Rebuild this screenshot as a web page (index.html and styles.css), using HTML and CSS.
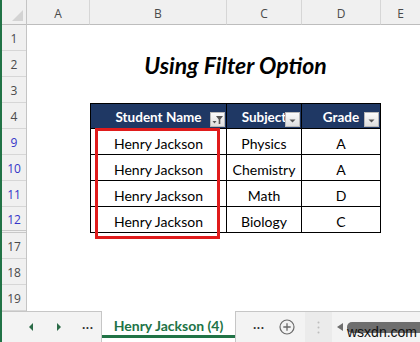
FILE: index.html
```html
<!DOCTYPE html>
<html>
<head>
<meta charset="utf-8">
<link rel="stylesheet" href="styles.css">
</head>
<body>
<div class="app">
  <div class="sheet">
    <div class="rowheads">
      <div class="corner"><svg width="11" height="11" viewBox="0 0 11 11"><polygon points="11,0 11,11 0,11" fill="#d3d3d3"/></svg></div>
      <div class="rh">1</div>
      <div class="rh">2</div>
      <div class="rh">3</div>
      <div class="rh">4</div>
      <div class="rh blue">9</div>
      <div class="rh blue">10</div>
      <div class="rh blue">11</div>
      <div class="rh blue hidden-after">12</div>
      <div class="rh">17</div>
      <div class="rh">18</div>
      <div class="rh">19</div>
    </div>
    <div class="cells">
      <div class="ch">A</div>
      <div class="ch">B</div>
      <div class="ch">C</div>
      <div class="ch">D</div>
      <div class="ch last">E</div>
      <div class="title">Using Filter Option</div>
      <div class="tbl">
        <div class="th">Student Name<span class="btn"><svg width="13" height="13" viewBox="0 0 13 13"><polygon points="1.5,8 5.5,8 3.5,10.5" fill="#555"/><polygon points="5,3 12,3 9.3,6.5 9.3,11 7.7,11 7.7,6.5" fill="#555"/></svg></span></div>
        <div class="th">Subject<span class="btn"><svg width="13" height="13" viewBox="0 0 13 13"><polygon points="3.5,6.5 9.5,6.5 6.5,9.5" fill="#555"/></svg></span></div>
        <div class="th">Grade<span class="btn"><svg width="13" height="13" viewBox="0 0 13 13"><polygon points="3.5,6.5 9.5,6.5 6.5,9.5" fill="#555"/></svg></span></div>
        <div class="td">Henry Jackson</div><div class="td">Physics</div><div class="td">A</div>
        <div class="td">Henry Jackson</div><div class="td">Chemistry</div><div class="td">A</div>
        <div class="td">Henry Jackson</div><div class="td">Math</div><div class="td">D</div>
        <div class="td">Henry Jackson</div><div class="td">Biology</div><div class="td">C</div>
        <div class="highlight"></div>
      </div>
    </div>
  </div>
  <div class="tabbar">
    <div class="nav">
      <span class="tri-left"></span>
      <span class="tri-right"></span>
      <span class="ell">...</span>
    </div>
    <div class="tab">Henry Jackson (4)</div>
    <span class="ell more">...</span>
    <span class="plus"><svg width="16" height="16" viewBox="0 0 16 16"><circle cx="8" cy="8" r="7" fill="none" stroke="#6a6a6a" stroke-width="1.2"/><path d="M8 4.3v7.4M4.3 8h7.4" stroke="#6a6a6a" stroke-width="1.3"/></svg></span>
    <div class="split"><svg width="3" height="13" viewBox="0 0 3 13"><circle cx="1.5" cy="1.5" r="1" fill="#bdbdbd"/><circle cx="1.5" cy="6.5" r="1" fill="#bdbdbd"/><circle cx="1.5" cy="11.5" r="1" fill="#bdbdbd"/></svg></div>
    <span class="scroll-left"></span>
    <div class="thumb"></div>
    <span class="watermark">wsxdn.com</span>
  </div>
</div>
</body>
</html>
```
FILE: styles.css
```css
* { box-sizing: border-box; }
html, body { margin: 0; padding: 0; }
body { width: 420px; height: 342px; overflow: hidden; background: #fff; font-family: "Open Sans", "Noto Sans", sans-serif; }
.app { width: 420px; height: 342px; border-left: 2px solid #217346; display: flex; flex-direction: column; position: relative; }
.sheet { display: flex; height: 311px; }
.rowheads { width: 25px; display: flex; flex-direction: column; background: #f0f0f0; border-right: 1px solid #c4c4c4; }
.corner { height: 25px; border-bottom: 1px solid #bdbdbd; display: flex; justify-content: flex-end; align-items: flex-end; padding: 0 3px 3px 0; }
.rh { height: 26px; border-bottom: 1px solid #d6d6d6; display: flex; align-items: center; justify-content: center; font-size: 12px; color: #4a4a4a; padding-top: 2px; }
.rh.blue { color: #3535c8; }
.rh.hidden-after { border-bottom: 3px double #c8c8c8; }
.cells { flex: 1; display: grid; grid-template-columns: 63px 137px 75px 79px 1fr; grid-template-rows: 25px repeat(11, 26px); }
.ch { background: #f0f0f0; border-bottom: 1px solid #bdbdbd; border-right: 1px solid #d6d6d6; display: flex; align-items: center; justify-content: center; font-size: 12px; color: #4a4a4a; padding-top: 2px; }
.ch.last { border-right: none; }
.title { grid-column: 2 / 5; grid-row: 3; display: flex; align-items: center; justify-content: center; font-family: Lato, sans-serif; font-weight: bold; font-style: italic; font-size: 23px; color: #000; padding-top: 1px; }
.tbl { grid-column: 2 / 5; grid-row: 5 / 10; display: grid; grid-template-columns: 136px 75px 79px; grid-template-rows: 25px repeat(4, 26px); border-top: 1px solid #000; border-left: 1px solid #000; position: relative; }
.th { background: #1f3864; color: #fff; font-family: Lato, sans-serif; font-weight: bold; font-size: 13.5px; border-right: 1px solid #000; border-bottom: 1px solid #000; display: flex; align-items: center; justify-content: center; padding-top: 1px; position: relative; overflow: hidden; white-space: nowrap; }
.btn { position: absolute; right: 1px; top: 8px; width: 15px; height: 15px; background: linear-gradient(#fbfbfb, #dedede); border: 1px solid #b8b8b8; display: flex; align-items: center; justify-content: center; }
.td { border-right: 1px solid #000; border-bottom: 1px solid #000; display: flex; align-items: flex-end; justify-content: center; font-family: Lato, sans-serif; font-size: 14px; line-height: 17px; color: #000; padding-bottom: 2px; }
.highlight { position: absolute; left: 4px; top: 24px; width: 125px; height: 111px; border: 3px solid #e01b1b; }
.tabbar { height: 31px; display: flex; align-items: center; background: #f3f3f3; border-top: 1px solid #c6c6c6; position: relative; }
.nav { width: 99px; height: 100%; display: flex; align-items: center; padding-left: 27px; }
.tri-left { width: 0; height: 0; border-top: 4px solid transparent; border-bottom: 4px solid transparent; border-right: 4px solid #2a6a47; }
.tri-right { width: 0; height: 0; border-top: 4px solid transparent; border-bottom: 4px solid transparent; border-left: 4px solid #2a6a47; margin-left: 24px; }
.ell { font-family: "Liberation Sans", sans-serif; font-weight: bold; font-size: 12px; color: #333; margin-left: 21px; letter-spacing: 0.5px; padding-bottom: 4px; }
.tab { width: 135px; height: 32px; margin-top: -1px; align-self: flex-start; background: #fff; border-left: 1px solid #c6c6c6; border-right: 1px solid #c6c6c6; display: flex; align-items: center; justify-content: center; font-family: Lato, sans-serif; font-weight: bold; font-size: 14px; color: #217346; padding-bottom: 3px; box-shadow: inset 0 -5px 0 #fff, inset 0 -8px 0 #217346; }
.more { margin-left: 17px; }
.plus { margin-left: 14px; display: flex; }
.split { margin-left: 10px; width: 27px; height: 100%; background: #ebebeb; display: flex; align-items: center; justify-content: center; }
.scroll-left { margin-left: 5px; width: 0; height: 0; border-top: 4px solid transparent; border-bottom: 4px solid transparent; border-right: 6px solid #6e6e6e; }
.thumb { margin-left: 4px; flex: 1; height: 11px; background: #6e6e6e; border-radius: 5px 0 0 5px; }
.watermark { position: absolute; left: 345px; top: 13px; font-family: "Liberation Sans", Arial, sans-serif; font-size: 14px; color: #111; line-height: 15px; }
```
